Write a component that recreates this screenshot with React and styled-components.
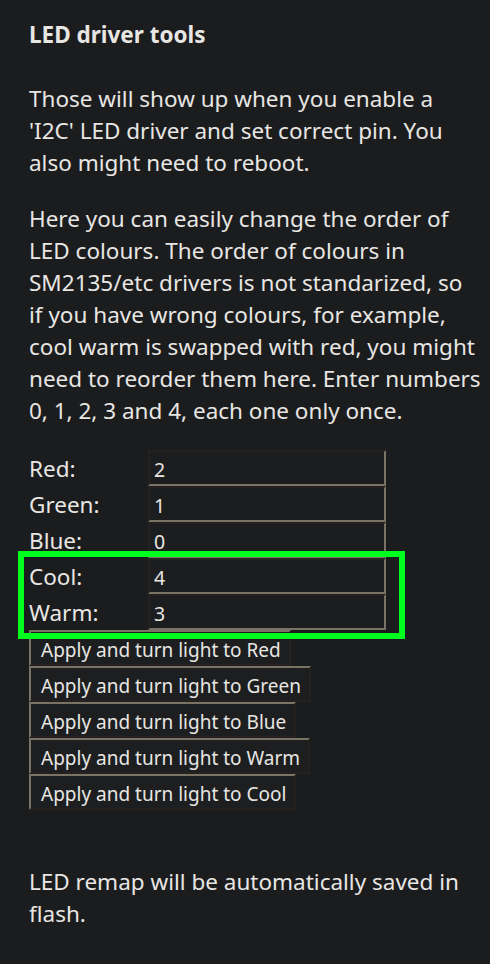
import React from "react";
import styled, { createGlobalStyle } from "styled-components";

const GlobalStyle = createGlobalStyle`
  html, body { margin: 0; padding: 0; background: #1b1c1e; }
  body {
    color: #e8e6e3;
    font-family: "Noto Sans", "Open Sans", sans-serif;
  }
`;

const Page = styled.main`
  padding: 19px 0 40px 29px;
  font-size: 22.5px;
  line-height: 32px;
`;

const Heading = styled.h3`
  margin: 0 0 32px;
  font-size: 22.5px;
  line-height: 32px;
  font-weight: 700;
`;

const Paragraph = styled.p`
  margin: ${(p) => p.$top ?? 0}px 0 ${(p) => p.$gap ?? 24}px;
  width: 461px;
  white-space: nowrap;
`;

const MapArea = styled.div`
  position: relative;
`;

const MapTable = styled.div`
  display: grid;
  grid-template-columns: 119px 238px;
  grid-auto-rows: 36px;
`;

const Label = styled.label`
  display: flex;
  align-items: center;
  padding-top: 1px;
`;

const Field = styled.input`
  box-sizing: border-box;
  width: 238px;
  height: 36px;
  margin: 0;
  padding: 3px 0 0 4px;
  background: #1c1d1f;
  color: #e8e6e3;
  font-family: "Noto Sans", "Open Sans", sans-serif;
  font-size: 19.5px;
  border-style: solid;
  border-width: 2px;
  border-color: #24211e #7a7264 #7a7264 #24211e;
  outline: none;
`;

const Highlight = styled.div`
  position: absolute;
  left: -11px;
  top: 101px;
  width: 387px;
  height: 88px;
  box-sizing: border-box;
  border: 6px solid #00ff1e;
  pointer-events: none;
`;

const ButtonStack = styled.div`
  display: flex;
  flex-direction: column;
  align-items: flex-start;
`;

const ActionButton = styled.button`
  box-sizing: border-box;
  height: 36px;
  margin: 0;
  padding: 3px 8px 0 10px;
  background: #1d1e20;
  color: #e8e6e3;
  font-family: "Noto Sans", "Open Sans", sans-serif;
  font-size: 19px;
  border-style: solid;
  border-width: 2px;
  border-color: #7a7264 #24211e #24211e #7a7264;
  cursor: pointer;
`;

const channels = [
  { name: "Red", value: "2" },
  { name: "Green", value: "1" },
  { name: "Blue", value: "0" },
  { name: "Cool", value: "4" },
  { name: "Warm", value: "3" },
];

const actions = ["Red", "Green", "Blue", "Warm", "Cool"];

const intro = [
  "Those will show up when you enable a",
  "'I2C' LED driver and set correct pin. You",
  "also might need to reboot.",
];

const explain = [
  "Here you can easily change the order of",
  "LED colours. The order of colours in",
  "SM2135/etc drivers is not standarized, so",
  "if you have wrong colours, for example,",
  "cool warm is swapped with red, you might",
  "need to reorder them here. Enter numbers",
  "0, 1, 2, 3 and 4, each one only once.",
];

const Lines = ({ lines }) =>
  lines.map((l, i) => (
    <React.Fragment key={i}>
      {l}
      {i < lines.length - 1 && <br />}
    </React.Fragment>
  ));

export default function App() {
  return (
    <>
      <GlobalStyle />
      <Page>
        <Heading>LED driver tools</Heading>
        <Paragraph>
          <Lines lines={intro} />
        </Paragraph>
        <Paragraph $gap={23}>
          <Lines lines={explain} />
        </Paragraph>
        <MapArea>
          <MapTable>
            {channels.map((c) => (
              <React.Fragment key={c.name}>
                <Label htmlFor={`map-${c.name}`}>{c.name}:</Label>
                <Field id={`map-${c.name}`} defaultValue={c.value} />
              </React.Fragment>
            ))}
          </MapTable>
          <Highlight />
        </MapArea>
        <ButtonStack>
          {actions.map((a) => (
            <ActionButton key={a}>Apply and turn light to {a}</ActionButton>
          ))}
        </ButtonStack>
        <Paragraph $top={56} $gap={0}>
          <Lines lines={["LED remap will be automatically saved in", "flash."]} />
        </Paragraph>
      </Page>
    </>
  );
}
